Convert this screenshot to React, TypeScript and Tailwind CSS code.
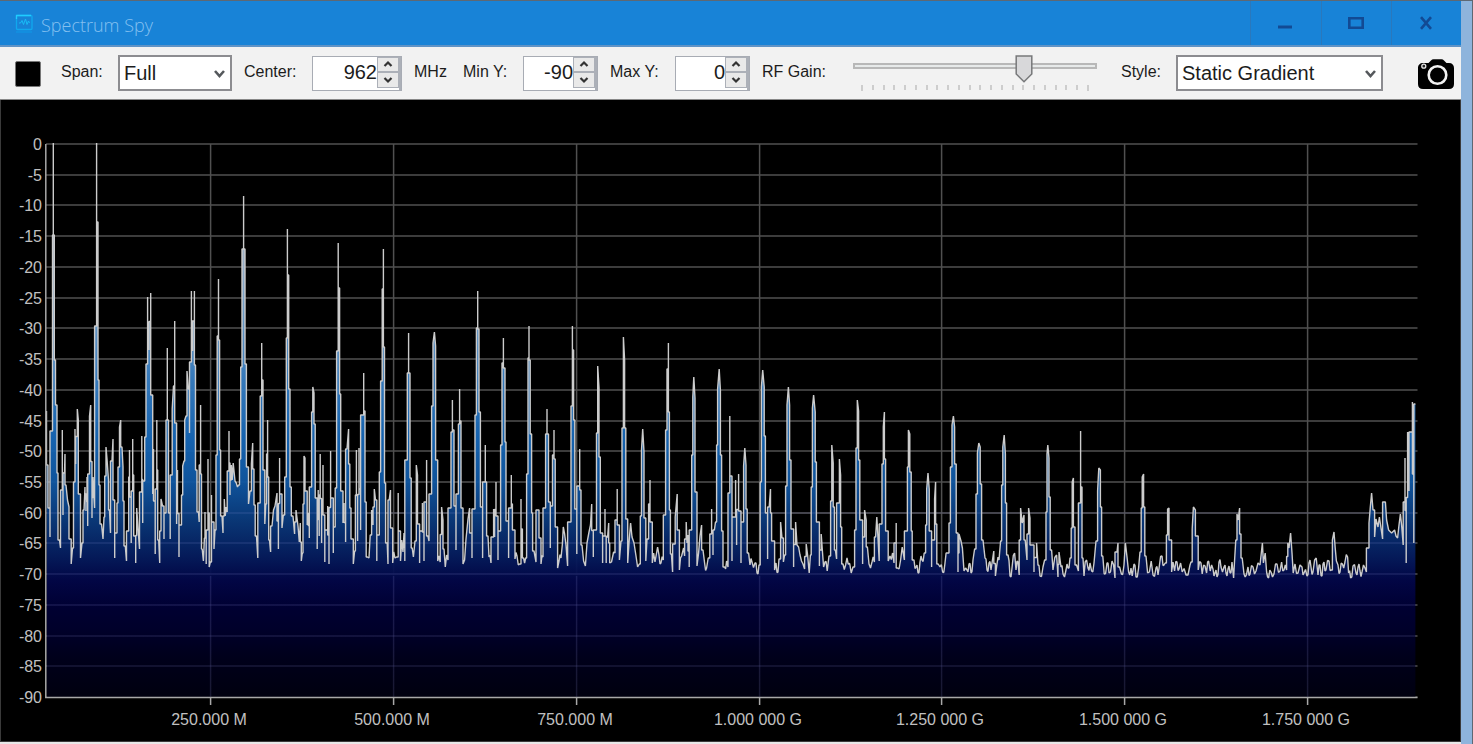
import { useState } from "react";
import type { ReactNode } from "react";

const TRACE = `46.5,411 48,465 49,508 50,537 51,431 52.5,235 53.3,143 54.3,235 55.5,360 57,405 58,473 59.5,540 60.5,548 61,490 62.3,430 63,515 64.5,473 65,454 66,485 67.5,500 69,507 70,539 71.2,564 72.5,548 73.5,482 75,429 75.7,464 77.3,409 78.3,420 79.5,494 80.5,558 82,543 83,510 84,510 85,487 86,511 87,477 87.7,526 88.7,474 89.5,416 90.7,405 92,518 93,477 94,498 94.6,508 95.3,326 96.6,143 98,222 99,380 100,485 101.5,524 103,539 104,517 104.7,476 106,447 107,459 108.5,480 109.5,510 110.5,533 112,461 113,439 113.7,500 114.7,558 116,533 117,503 118,467 119.5,427 120.7,420 122,447 123,467 124,501 125.3,546 126.5,561 127.5,531 128.7,477 129.5,450 130.2,497 131.2,543 132.7,439 133.7,475 134.7,536 135.7,563 136.7,508 138,528 139.5,549 140.5,492 141.8,436 142.7,523 143.5,481 144.7,437 146,364 147.6,297 149,350 150.7,293 151.7,395 152.7,494 153.5,449 154.2,501 155.2,554 155.8,489 156.8,420 157.7,470 158.7,540 159.7,563 161,499 162.5,506 164,539 165,513 166,420 167.3,348 168.5,420 169.2,513 170.2,539 171.2,475 172.2,409 173.5,386 174.7,321 175.6,423 176.6,524 177.5,470 179,557 180.5,525 181.5,495 182.7,466 184,461 184.7,420 186,416 187,371 188.3,389 189.5,433 190.3,362 191.4,291 192.6,351 194.4,291 195.5,365 197,470 198.5,512 199.2,522 199.7,465 200.6,405 201.5,474 202.2,549 203.4,561 204.4,538 205,512 206.2,564 207,530 208,459 209.2,567 210.3,562 211.5,495 213,522 214,549 215,530 216,455 217.2,336 218.5,279 219.6,340 220.6,450 222,516 223,533 224.3,499 225.2,516 226.2,507 227.2,512 228.2,471 229,431 230,495 231.3,465 232.2,480 233.2,463 235,481 236.3,483 237.5,487 238.6,485 239.5,459 240.7,367 242,249 243.6,196 245,249 246.4,364 247.5,467 248.5,504 250,491 251.4,464 252.7,443 254,469 255.2,505 256.5,536 257.8,558 258.7,503 260.2,396 261.7,343 263,380 263.8,470 264.8,524 265.8,504 266.6,454 267.6,420 268.7,477 269.5,540 270.6,552 272,526 273.5,510 275,506 277,493 278.4,549 279.6,458 281,494 282,528 283.3,515 284.7,477 286.3,338 287.4,229 288.7,275 290,389 291.3,487 293,516 294.6,534 296,510 298,526 299.3,542 300.3,523 301.3,561 302.3,553 303,504 304,456 305,458 306.2,491 307.2,525 308.2,513 309.3,538 310.3,487 311.6,412 312.8,387 314,393 315.2,424 316.2,498 317.2,549 318.2,490 319.2,536 320.2,454 321.6,543 323,465 324,515 324.8,562 326,530 327.7,506 329,564 330.6,451 332,498 333.3,553 334.2,527 335.2,488 336.6,351 338.2,243 339.6,288 340.7,394 341.7,491 343,523 344,503 345.6,542 347,449 348.6,429 349.8,464 351,508 352.2,539 353.3,564 354.6,551 355.4,495 356.4,450 357.6,541 359,448 360.6,530 362,415 363.7,373 365,411 366.2,502 367.4,557 369,558 370.2,535 371.6,510 373,525 374.3,489 375.5,500 376.8,561 378.2,535 379.3,472 380.6,381 382.2,289 383.4,249 384.5,347 385.6,483 387.2,543 388,564 389.2,500 390.5,490 391.6,528 392.7,563 393.7,552 395,558 396.6,557 398.2,493 399.5,531 400.5,561 401.7,540 403,552 404,533 404.8,561 406,460 407.3,373 408.6,333 410,373 411.2,478 412.2,548 413.4,557 415,541 416.3,465 417.5,475 418.6,524 419.6,563 421,531 422.4,503 424,561 425.3,502 426.6,460 428,536 429,541 430.2,494 431.6,406 433,343 434.4,332 435.6,346 436.7,460 437.7,561 439,556 440.2,562 441.6,507 443,520 444,549 445.3,567 446.6,555 448,560 449.6,508 451,432 452.4,400 454,430 455,506 456,550 457.2,494 458.4,424 459.6,389 461,421 462,508 463,564 464.6,560 466,539 468,519 469.6,508 470.6,533 472,558 473.6,509 475,415 476.4,328 477.7,291 479,329 480.4,412 481.6,507 482.6,558 484,482 485.3,445 486.6,482 488,536 489,557 491,563 492.4,537 493.6,509 494.6,537 496,482 497.2,516 498,560 499.2,531 500.6,445 502,363 503.4,338 505,368 506,442 507.6,521 508.6,558 510,508 511.3,475 512.4,504 513.6,530 515,559 517,556 519.6,564 521,499 522.4,529 523.6,558 525.6,558 526.6,474 528,358 529,326 530.2,360 531.6,434 532.6,513 534,551 536,562 537.6,510 539,510 540,538 541,564 543,557 544,508 545.6,434 547,409 548.5,434 549.3,502 550.3,548 551.3,506 552.5,455 554,430 555.2,459 556,527 557.6,568 559,561 561,558 562.3,545 563.3,527 564.6,534 566,545 567.6,566 569.6,522 571,406 572.4,326 573.6,350 574.8,420 575.7,509 576.8,554 578,486 579.7,449 581,490 582,545 583.6,561 585.4,566 587,543 589,532 590.5,525 591.7,504 593.3,557 595,530 596.5,433 597.7,366 599,388 600.3,457 601.5,533 602.6,563 603.7,536 605,509 606.2,563 607.6,537 608.7,523 609.7,563 611.5,562 613.6,552 615,553 616,520 617.2,489 618.3,525 619.4,560 621,541 622,428 623.4,337 624.6,360 625.8,428 626.7,519 627.7,563 629,543 630.6,523 632,537 634,543 636,556 637.6,567 639.3,564 640.3,516 641.5,450 642.7,429 644,452 645.2,518 645.8,561 647,539 648.6,504 650,480 651.2,522 652.3,563 653.6,553 655,562 657.6,547 659,555 661,563 663.3,560 664.3,515 665.6,430 667,369 668.4,343 669.4,412 670.4,510 671.4,554 672.6,572 673.8,544 675.2,517 677.2,494 678.2,530 679.4,570 681.6,556 683.6,548 684.6,556 686.2,522 687,543 688,535 689.2,567 690.6,530 691.7,455 692.8,397 693.8,377 695,398 696.3,492 697,566 698.6,553 700,536 701.6,525 703,550 704.6,563 706.6,568 708.2,558 709.8,534 711.6,509 713,555 714.4,530 715.5,522 716.6,445 717.6,389 719.2,369 720.4,390 721.6,455 723,531 724.6,567 726.6,561 728,567 728.8,493 729.8,416 731,476 732,561 734,517 735.6,480 736.6,545 738.6,474 739.8,511 741,563 742.4,522 743.6,466 744.8,448 746,465 747.2,509 748.6,553 750,565 752,562 755,563 757,573 759,565 760.2,482 761.4,387 762.7,370 764.2,387 765.4,436 766.5,513 767.6,559 769.2,507 770.5,489 771.6,513 772.7,541 774.6,570 776,563 778,572 779,559 780.6,522 782,538 783.4,562 784.6,555 785.6,486 787,405 788.4,387 789.6,405 791,460 792.2,529 793.6,567 795.6,522 797,545 798.6,547 800,555 801.5,561 803,564 804.6,569 806.2,544 807.6,555 809.2,573 810.4,555 811.2,487 812.4,408 813.6,395 815.2,412 816.4,462 817.6,522 819.4,566 821.2,534 822.4,551 823.6,567 825,562 827.2,571 829,556 830.6,501 831.8,445 833.2,463 834.4,507 835.4,550 836.6,559 838.2,503 839.4,459 840.6,475 841.7,527 843,564 845.6,565 847,558 848.2,564 851.2,573 853,567 854.6,530 856,448 857.3,400 858.6,411 859.8,460 861.2,520 862.6,564 864.6,510 866.2,520 867.4,547 869,564 872,562 874.4,562 875.6,537 876.8,517 878,538 879.2,561 881,524 882,464 883.3,427 884.4,412 885.6,459 887,531 888.2,561 890,556 892.6,553 894,563 896.2,523 897.5,568 900.6,560 902.2,547 904.4,560 906.2,531 907.4,467 908.4,430 909.8,434 911.2,472 912.2,531 914,560 916,567 918,573 920,562 922,560 924.2,553 925.6,525 926.7,489 928,473 929.2,489 930.4,531 931.6,567 933.6,540 934.6,499 935.6,482 936.8,524 938.2,564 940,567 942.6,572 945,563 947.2,553 949,523 950.4,467 952,425 953.4,416 954.6,427 956.2,464 957.2,533 958,572 959,534 961,541 962.4,548 964,571 965.6,568 967,570 969,564 971,573 973,560 974.6,549 976,494 977.4,453 978.8,443 980.2,447 981.6,484 983,540 985,558 987,570 989,563 991,570 993.8,551 995.4,576 997,564 999,560 1000.6,541 1001.6,485 1002.8,447 1004.2,435 1005.4,454 1006.6,503 1008,555 1010,576 1012,568 1014.6,553 1016,570 1018,562 1019.2,575 1019.8,540 1020.6,508 1022.2,523 1024,515 1025.2,540 1027,560 1028.6,508 1030,518 1031.6,545 1034,572 1036.6,543 1038,565 1040,576 1043,567 1044.6,560 1046,512 1047,454 1047.8,445 1049,458 1050.2,497 1051.6,550 1053,570 1056.6,555 1058,577 1059,552 1061,567 1063,574 1066,570 1068,568 1070,558 1071.2,528 1072.2,482 1073.4,478 1075,527 1076.6,565 1078.4,571 1079.4,503 1080.6,431 1082,487 1083,558 1084,576 1085.2,562 1088,568 1090,563 1091.6,571 1094,563 1096,541 1097.6,491 1098.8,468 1100.4,470 1101.6,507 1102.8,556 1104.2,574 1107,563 1109,573 1112,561 1115,578 1117,552 1118,543 1119.6,567 1121.4,574 1124,565 1125.4,543 1127,557 1128.6,572 1131,568 1132.2,576 1134,564 1136,577 1138.6,568 1140,552 1141.2,508 1142.2,477 1143.6,474 1144.8,507 1146,556 1147.6,573 1151.2,561 1153,575 1156,568 1158,575 1159.2,567 1162,556 1164,565 1165.2,563 1166.4,535 1167.6,509 1169,508 1170.2,540 1171.6,572 1173,562 1174.6,571 1177,562 1179,569 1180.6,563 1182.2,572 1186,575 1190,565 1191,562 1192.2,529 1193.4,507 1195.4,510 1196.6,536 1198.2,570 1201,563 1202.2,574 1205,566 1206.6,573 1208.6,561 1210.2,571 1213,569 1215,573 1217,577 1219,562 1221,567 1224,567 1226,573 1228,569 1230,573 1232,562 1233.6,578 1234.6,560 1235.8,540 1237,514 1238.2,520 1239.6,508 1241,534 1242.2,558 1244,574 1246.4,575 1248,567 1250,574 1253,567 1256,571 1260,565 1262.4,543 1263.4,563 1265.2,553 1266.6,572 1268.6,578 1271,572 1274,574 1277,564 1280,571 1281.6,562 1284,570 1286.6,570 1287.8,543 1289,548 1290.6,533 1292,553 1293.2,573 1295,564 1298,573 1302,567 1304,573 1307,576 1309,563 1311,567 1313,572 1316.2,558 1318,575 1320,565 1322,576 1324,562 1326,570 1329,561 1331.2,570 1332.4,540 1334,532 1335.2,548 1336.4,561 1338,565 1340,572 1342.4,564 1345,562 1347.6,557 1348.6,573 1350.6,578 1353,566 1356,573 1358,567 1360,571 1362,572 1365,568 1366.4,572 1367.6,548 1369,523 1370.4,506 1371.6,493 1373,510 1374.6,537 1376,519 1378,527 1379.4,517 1382.6,539 1384,502 1385.4,502 1386.6,520 1388.6,530 1391.6,533 1394.6,530 1396,536 1397.6,538 1399,525 1400.4,514 1401.6,525 1403.2,545 1404.2,502 1405,458 1406.2,563 1407.6,432 1409,491 1410.6,432 1412.4,402 1413.2,474 1413.8,543 1415.4,404`;

const LEFT = 46;
const RIGHT = 1416;
const TOP = 144;
const BOTTOM = 697;

type Point = [number, number];

/** Fills the wide gaps along the noise floor with an alternating ripple. */
function withRipple(points: Point[]): Point[] {
  const out: Point[] = [];
  points.forEach(([x, y], i) => {
    out.push([x, y]);
    const next = points[i + 1];
    if (next && next[0] - x >= 1.9 && y > 552 && next[1] > 552) {
      const shift = i % 2 === 0 ? 5 : -5;
      out.push([(x + next[0]) / 2, Math.min(577, (y + next[1]) / 2 + shift)]);
    }
  });
  return out;
}

/** Tall slopes are joined with square steps, gentle ones with straight lines. */
function stepPath(points: Point[]): string {
  const height = (i: number) => points[i][1];
  const inner = (i: number) => i > 0 && i < points.length - 1;
  const isTrough = (i: number) => inner(i) && height(i) > height(i - 1) && height(i) > height(i + 1);
  const isPeak = (i: number) => inner(i) && height(i) < height(i - 1) && height(i) < height(i + 1);
  let d = `M${points[0][0]} ${points[0][1]}`;
  for (let i = 0; i < points.length - 1; i++) {
    const y0 = height(i);
    const [x1, y1] = points[i + 1];
    if (Math.abs(y1 - y0) < 24) {
      d += `L${x1} ${y1}`;
      continue;
    }
    const trough = isTrough(i) || isTrough(i + 1);
    const peak = isPeak(i) || isPeak(i + 1);
    const y = trough && peak ? (y0 + y1) / 2 : trough ? Math.min(y0, y1) : Math.max(y0, y1);
    d += `V${y}H${x1}V${y1}`;
  }
  return d;
}

const STEPS = stepPath(withRipple(TRACE.split(" ").map((p) => p.split(",").map(Number) as Point)));

const levels = Array.from({ length: 19 }, (_, i) => ({
  label: String(i === 0 ? 0 : -5 * i),
  y: TOP + Math.round((i * (BOTTOM - TOP)) / 18),
}));

const frequencies = [
  { label: "250.000 M", x: 210 },
  { label: "500.000 M", x: 393 },
  { label: "750.000 M", x: 576 },
  { label: "1.000 000 G", x: 759 },
  { label: "1.250 000 G", x: 941 },
  { label: "1.500 000 G", x: 1124 },
  { label: "1.750 000 G", x: 1307 },
];

function SpectrumChart() {
  return (
    <svg viewBox="1 100 1459 641" className="block w-full" role="img" aria-label="Spectrum">
      <defs>
        <linearGradient id="level" gradientUnits="userSpaceOnUse" x1="0" y1={TOP} x2="0" y2={BOTTOM}>
          <stop offset="0" stopColor="#e6e6ea" />
          <stop offset="0.17" stopColor="#b4c0d0" />
          <stop offset="0.3" stopColor="#74a4d0" />
          <stop offset="0.42" stopColor="#3a80c4" />
          <stop offset="0.53" stopColor="#1768b8" />
          <stop offset="0.61" stopColor="#1058a4" />
          <stop offset="0.68" stopColor="#0a3a7c" />
          <stop offset="0.75" stopColor="#051a5c" />
          <stop offset="0.79" stopColor="#020648" />
          <stop offset="0.84" stopColor="#000034" />
          <stop offset="0.88" stopColor="#00002c" />
          <stop offset="0.93" stopColor="#00001c" />
          <stop offset="1" stopColor="#000010" />
        </linearGradient>
      </defs>
      <g stroke="#505050" strokeWidth="1.5">
        {levels.map((l) => (
          <line key={l.label} x1={LEFT} x2={RIGHT + 1.5} y1={l.y} y2={l.y} />
        ))}
        {frequencies.map((f) => (
          <line key={f.label} x1={f.x + 0.6} x2={f.x + 0.6} y1={TOP} y2={BOTTOM} />
        ))}
      </g>
      <path d={`${STEPS}V697H46.5z`} fill="url(#level)" fillOpacity="0.95" />
      <g stroke="#8080c8" strokeWidth="1.5" strokeOpacity="0.17">
        {levels.slice(12, 18).map((l) => (
          <line key={l.label} x1={LEFT} x2={RIGHT} y1={l.y} y2={l.y} />
        ))}
        {frequencies.map((f) => (
          <line key={f.label} x1={f.x + 0.6} x2={f.x + 0.6} y1="576" y2={BOTTOM} />
        ))}
      </g>
      <path d={STEPS} fill="none" stroke="#cccccc" strokeWidth="1.4" strokeLinejoin="bevel" />
      <g stroke="#a8a8a8" strokeWidth="1.5">
        <line x1="45.8" x2="45.8" y1={TOP} y2={BOTTOM + 1} />
        <line x1="45" x2={RIGHT + 1.5} y1={BOTTOM + 0.5} y2={BOTTOM + 0.5} />
        {frequencies.map((f) => (
          <line key={f.label} x1={f.x + 0.6} x2={f.x + 0.6} y1={BOTTOM} y2="705" />
        ))}
      </g>
      <g fill="#c0c0c0" fontSize="16" fontFamily="Liberation Sans, Arial, sans-serif">
        {levels.map((l) => (
          <text key={l.label} x="42" y={l.y + 6} textAnchor="end">
            {l.label}
          </text>
        ))}
        {frequencies.map((f) => (
          <text key={f.label} x={f.x - 1} y="725" textAnchor="middle">
            {f.label}
          </text>
        ))}
      </g>
    </svg>
  );
}

function Caption({ htmlFor, className, children }: { htmlFor: string; className: string; children: ReactNode }) {
  return (
    <label htmlFor={htmlFor} className={`shrink-0 pb-0.5 text-[16px] leading-5 whitespace-nowrap ${className}`}>
      {children}
    </label>
  );
}

function Chevron({ up }: { up?: boolean }) {
  return (
    <svg width="12" height="8" viewBox="0 0 12 8" fill="none" stroke="#333" strokeWidth="2.2" aria-hidden="true">
      <path d={up ? "M2.5 6 6 2.5l3.500 3.500" : "M2.5 2l3.500 3.500 3.500-3.500"} />
    </svg>
  );
}

function Spinner({ id, name, initial, className }: { id: string; name: string; initial: number; className: string }) {
  const [value, setValue] = useState(initial);
  return (
    <div className={`flex h-[35px] shrink-0 border border-[#a8acb4] bg-white ${className}`}>
      <input
        id={id}
        type="text"
        inputMode="numeric"
        value={value}
        onChange={(e) => setValue(Number(e.target.value) || 0)}
        className="w-0 min-w-0 flex-1 bg-transparent pb-0.5 text-right text-[20px] leading-6 outline-none"
      />
      <div className="flex w-6 shrink-0 flex-col border-r-2 border-[#acb0b8] pb-0.5">
        <button
          type="button"
          aria-label={`Increase ${name}`}
          onClick={() => setValue(value + 1)}
          className="flex flex-1 items-center justify-center border border-[#acb0b8] bg-[#e9e9e9]"
        >
          <Chevron up />
        </button>
        <button
          type="button"
          aria-label={`Decrease ${name}`}
          onClick={() => setValue(value - 1)}
          className="flex flex-1 items-center justify-center border border-[#acb0b8] bg-[#e9e9e9]"
        >
          <Chevron />
        </button>
      </div>
    </div>
  );
}

function Dropdown({ id, options, className }: { id: string; options: string[]; className: string }) {
  return (
    <div className={`relative shrink-0 ${className}`}>
      <select
        id={id}
        className="h-9 w-full appearance-none rounded-none border-2 border-[#8c8c90] bg-white pl-1 text-[20px] leading-6 outline-none"
      >
        {options.map((o) => (
          <option key={o}>{o}</option>
        ))}
      </select>
      <svg
        className="pointer-events-none absolute top-3.5 right-1.5"
        width="13"
        height="10"
        viewBox="0 0 13 10"
        fill="none"
        stroke="#55585c"
        strokeWidth="2.6"
        aria-hidden="true"
      >
        <path d="M2 2l4.500 5 4.500-5" />
      </svg>
    </div>
  );
}

function GainSlider() {
  const [gain, setGain] = useState(15);
  const ticks = Array.from({ length: 22 }, (_, i) => i);
  return (
    <div className="relative h-9 min-w-24 flex-1">
      <div className="pt-2">
        <div className="h-1.5 border-2 border-[#b8b8b8] bg-[#e7eaea]" />
      </div>
      <div className="flex justify-between px-2 pt-4">
        {ticks.map((t) => (
          <span key={t} className={`w-0.5 bg-[#cdcdcd] ${t === 0 || t === 21 ? "h-1.5" : "h-[5px]"}`} />
        ))}
      </div>
      <div className="absolute inset-x-2 top-0">
        <svg
          className="absolute top-0 -translate-x-1/2"
          style={{ left: `${(gain / 21) * 100}%` }}
          width="18"
          height="28"
          viewBox="0 0 18 28"
          aria-hidden="true"
        >
          <path d="M1.200 1h15.600v18L9 26.800 1.200 19z" fill="#d8d8da" stroke="#77787a" strokeWidth="1.5" />
        </svg>
      </div>
      <input
        id="gain"
        type="range"
        min={0}
        max={21}
        value={gain}
        onChange={(e) => setGain(Number(e.target.value))}
        className="absolute inset-0 h-full w-full cursor-pointer opacity-0"
      />
    </div>
  );
}

function TitleBar() {
  const control = "flex h-full items-center justify-center border-l border-[#2a78bc] pr-0.5";
  return (
    <header className="flex h-[46px] items-center border-b-2 border-[#5f93c6] bg-[#1883d7]">
      <svg className="mt-px ml-[15px] shrink-0" width="18" height="20" viewBox="0 0 18 20" fill="none" aria-hidden="true">
        <rect x="1.500" y="1.500" width="15.500" height="14" rx="1" stroke="#10a8ee" strokeWidth="1.3" />
        <path d="M1.500 5V1.500h14.500" stroke="#20ccff" strokeWidth="1.3" />
        <path d="M4 9h1.500l1.500-2.500 1.500 4L10.500 5l1.500 5.500L13.500 7l1 2" stroke="#18bcf6" />
        <path d="M1 18h16" stroke="#1295e4" strokeWidth="1.3" />
      </svg>
      <h1 className="mt-1 ml-2 flex-1 font-['Open_Sans',sans-serif] text-[18px] font-light text-[#84c0f0]">Spectrum Spy</h1>
      <button type="button" aria-label="Minimize" className={`w-[71px] ${control}`}>
        <svg width="16" height="14" viewBox="0 0 16 14" aria-hidden="true">
          <path d="M1 9.500h14v3H1z" fill="#124a94" />
        </svg>
      </button>
      <button type="button" aria-label="Maximize" className={`w-[70px] ${control}`}>
        <svg width="16" height="14" viewBox="0 0 16 14" fill="none" stroke="#124a94" aria-hidden="true">
          <path d="M1.300 2.300h13.400v9.400H1.300z" strokeWidth="2.600" />
        </svg>
      </button>
      <button type="button" aria-label="Close" className={`w-[70px] ${control}`}>
        <svg width="14" height="14" viewBox="0 0 14 14" fill="none" stroke="#124a94" aria-hidden="true">
          <path d="M2 1.200l10 11.600M12 1.200l-10 11.600" strokeWidth="2.600" />
        </svg>
      </button>
    </header>
  );
}

function Toolbar() {
  return (
    <div className="flex h-[53px] items-center border-b border-[#888] bg-[#f2f2f2] pr-[7px] pl-[15px] text-[#1c1c1c]">
      <button type="button" aria-label="Stop" className="mt-0.5 mr-5 size-[26px] shrink-0 rounded-xs border border-[#777] bg-black" />
      <Caption htmlFor="span" className="w-[57px]">
        Span:
      </Caption>
      <Dropdown id="span" options={["Full", "Custom"]} className="w-[114px]" />
      <Caption htmlFor="center" className="ml-3 w-[68px]">
        Center:
      </Caption>
      <Spinner id="center" name="center" initial={962} className="w-[90px]" />
      <Caption htmlFor="center" className="ml-3 w-[49px]">
        MHz
      </Caption>
      <Caption htmlFor="min-y" className="w-[60px]">
        Min Y:
      </Caption>
      <Spinner id="min-y" name="min Y" initial={-90} className="w-[75px]" />
      <Caption htmlFor="max-y" className="ml-3 w-[65px]">
        Max Y:
      </Caption>
      <Spinner id="max-y" name="max Y" initial={0} className="w-[75px]" />
      <Caption htmlFor="gain" className="ml-3 w-[91px]">
        RF Gain:
      </Caption>
      <GainSlider />
      <Caption htmlFor="style" className="ml-6 w-[55px]">
        Style:
      </Caption>
      <Dropdown id="style" options={["Static Gradient", "Dots", "Simple Curve"]} className="w-[207px]" />
      <button type="button" aria-label="Take snapshot" className="mt-0.5 ml-[35px] shrink-0">
        <svg width="36" height="30" viewBox="0 0 36 30" aria-hidden="true">
          <path
            d="M5 4h5.500L13 1.500C13.800.7 14.500.3 15.500.3h8c1 0 1.800.4 2.500 1.200L28.500 4H31c3.200 0 5 2 5 5v16c0 3.200-1.800 5-5 5H5c-3.200 0-5-1.800-5-5V9c0-3 2-5 5-5z"
            fill="#000"
          />
          <circle cx="19.500" cy="16" r="8.800" fill="none" stroke="#f2f2f2" strokeWidth="2.600" />
          <circle cx="5.800" cy="7.200" r="2" fill="#222" stroke="#e4e4e4" strokeWidth="1.300" />
        </svg>
      </button>
    </div>
  );
}

export default function App() {
  return (
    <div className="min-h-screen border-t border-r border-[#5e6873] bg-[#8eb4dc] pr-[11px] font-['Liberation_Sans',Arial,sans-serif]">
      <main className="border-b-2 border-[#e8e8e8] bg-black">
        <TitleBar />
        <Toolbar />
        <div className="border-r border-b border-l border-[#3a3a3a]">
          <SpectrumChart />
        </div>
      </main>
    </div>
  );
}
